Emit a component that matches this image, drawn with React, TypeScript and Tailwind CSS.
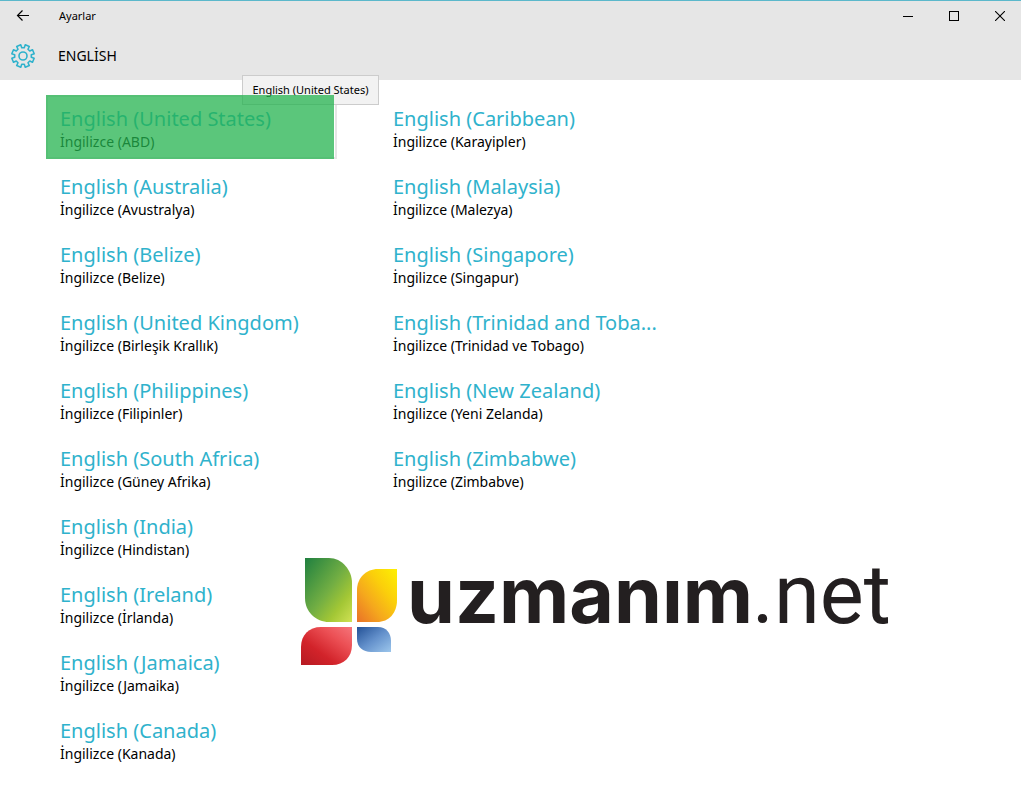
import clsx from "clsx";

type Language = { name: string; local: string };

const columns: Language[][] = [
  [
    { name: "English (United States)", local: "İngilizce (ABD)" },
    { name: "English (Australia)", local: "İngilizce (Avustralya)" },
    { name: "English (Belize)", local: "İngilizce (Belize)" },
    { name: "English (United Kingdom)", local: "İngilizce (Birleşik Krallık)" },
    { name: "English (Philippines)", local: "İngilizce (Filipinler)" },
    { name: "English (South Africa)", local: "İngilizce (Güney Afrika)" },
    { name: "English (India)", local: "İngilizce (Hindistan)" },
    { name: "English (Ireland)", local: "İngilizce (İrlanda)" },
    { name: "English (Jamaica)", local: "İngilizce (Jamaika)" },
    { name: "English (Canada)", local: "İngilizce (Kanada)" },
  ],
  [
    { name: "English (Caribbean)", local: "İngilizce (Karayipler)" },
    { name: "English (Malaysia)", local: "İngilizce (Malezya)" },
    { name: "English (Singapore)", local: "İngilizce (Singapur)" },
    { name: "English (Trinidad and Toba...", local: "İngilizce (Trinidad ve Tobago)" },
    { name: "English (New Zealand)", local: "İngilizce (Yeni Zelanda)" },
    { name: "English (Zimbabwe)", local: "İngilizce (Zimbabve)" },
  ],
];

// one closed outline with eight teeth, drawn around 0,0
function gearPath() {
  const points: string[] = [];
  for (let i = 0; i < 8; i++) {
    const steps = [
      [-14, 8.4],
      [-11, 11.4],
      [11, 11.4],
      [14, 8.4],
    ];
    for (const [offset, radius] of steps) {
      const angle = ((i * 45 + 22.5 + offset) * Math.PI) / 180;
      points.push(`${(radius * Math.cos(angle)).toFixed(2)} ${(radius * Math.sin(angle)).toFixed(2)}`);
    }
  }
  return `M${points.join("L")}Z`;
}

function Gear() {
  return (
    <svg viewBox="-13 -13 26 26" className="size-[26px]" fill="none" stroke="#2fb2cc" strokeWidth="1.6" strokeLinejoin="round" aria-hidden="true">
      <path d={gearPath()} />
      <circle r="4" />
    </svg>
  );
}

function TitleBar() {
  return (
    <div className="flex h-[30px] items-center">
      <button type="button" aria-label="Geri" className="flex h-full w-[46px] items-center justify-center">
        <svg viewBox="0 0 14 12" className="h-3 w-3.5" fill="none" stroke="black" strokeWidth="1.2" aria-hidden="true">
          <path d="M13 5.5H1.5M6.5 0.5L1.5 5.5L6.5 10.5" />
        </svg>
      </button>
      <span className="ml-[13px] text-[11px]">Ayarlar</span>
      <div className="ml-auto flex h-full">
        <button type="button" aria-label="Simge durumuna küçült" className="flex w-[46px] items-center justify-center">
          <svg viewBox="0 0 10 10" className="size-2.5" shapeRendering="crispEdges" aria-hidden="true">
            <path d="M0 5H10V6H0Z" />
          </svg>
        </button>
        <button type="button" aria-label="Ekranı kapla" className="flex w-[46px] items-center justify-center">
          <span className="size-2.5 border border-black" />
        </button>
        <button type="button" aria-label="Kapat" className="flex w-11 items-center justify-center pl-0.5">
          <svg viewBox="0 0 10 10" className="size-2.5" stroke="black" strokeWidth="1.1" aria-hidden="true">
            <path d="M0 0L10 10M10 0L0 10" />
          </svg>
        </button>
      </div>
    </div>
  );
}

function LanguageTile({ language, active }: { language: Language; active: boolean }) {
  return (
    <li className="relative">
      <button
        type="button"
        className={clsx(
          "flex h-16 w-full flex-col border-2 pt-[9px] pl-3 text-left whitespace-nowrap",
          active ? "border-[#e6e6e6]" : "border-transparent"
        )}
      >
        <span className="text-[20px] leading-[26px] text-[#2fb2cc]">{language.name}</span>
        <span className="text-[14px] leading-5">{language.local}</span>
      </button>
      {active && (
        <>
          <div
            role="tooltip"
            className="absolute -top-5 left-[196px] flex h-[30px] w-[137px] items-center justify-center border border-[#cccccc] bg-[#f2f2f2] text-[11px] whitespace-nowrap"
          >
            {language.name}
          </div>
          <div className="pointer-events-none absolute inset-y-0 left-0 right-[3px] bg-[#24b34f]/75" />
        </>
      )}
    </li>
  );
}

function Watermark() {
  return (
    <svg
      viewBox="0 -20 600 130"
      className="pointer-events-none absolute top-[537px] left-[300px] h-[130px] w-[600px]"
      role="img"
      aria-label="uzmanım.net"
    >
      <defs>
        <linearGradient id="green" x1="0" y1="0" x2="1" y2="1">
          <stop offset="0" stopColor="#1f8040" />
          <stop offset="0.5" stopColor="#72ae43" />
          <stop offset="0.75" stopColor="#a3c735" />
          <stop offset="1" stopColor="#d0e154" />
        </linearGradient>
        <linearGradient id="yellow" x1="0" y1="1" x2="1" y2="0">
          <stop offset="0" stopColor="#e97128" />
          <stop offset="0.35" stopColor="#f5a81d" />
          <stop offset="0.65" stopColor="#fbcf0b" />
          <stop offset="1" stopColor="#fdf003" />
        </linearGradient>
        <linearGradient id="red" x1="0" y1="1" x2="1" y2="0">
          <stop offset="0" stopColor="#b51a22" />
          <stop offset="0.35" stopColor="#d2232a" />
          <stop offset="0.7" stopColor="#ec5055" />
          <stop offset="1" stopColor="#f5757b" />
        </linearGradient>
        <linearGradient id="blue" x1="0" y1="0" x2="1" y2="1">
          <stop offset="0" stopColor="#235196" />
          <stop offset="0.5" stopColor="#6390cb" />
          <stop offset="1" stopColor="#9cc6ec" />
        </linearGradient>
      </defs>
      <path d="M5 1H29C42 1 52 13 52 26V65H29C16 65 5 55 5 41Z" fill="url(#green)" />
      <path d="M57 65V33C57 21 66 12 78 12H97V43C97 56 89 65 77 65Z" fill="url(#yellow)" />
      <path d="M1 108V90C1 78 9 70 21 70H52V88C52 100 44 108 32 108Z" fill="url(#red)" />
      <path d="M57 70H78C86 70 91 76 91 84V95H71C63 95 57 90 57 82Z" fill="url(#blue)" />
      <text x="107" y="66" fontSize="77" fontWeight="700" fontFamily="Inter, sans-serif" fill="#231f20">
        uzmanım
      </text>
      <text x="452" y="66" fontSize="83" fontFamily="Roboto, sans-serif" fill="#231f20">
        .net
      </text>
    </svg>
  );
}

export default function App() {
  return (
    <div className="relative min-h-screen overflow-hidden bg-white font-['Noto_Sans','Open_Sans',sans-serif] text-black">
      <header className="border-t border-[#5bb8cb] bg-[#e6e6e6]">
        <TitleBar />
        <div className="flex h-[49px] items-center gap-[22px] pl-2.5">
          <Gear />
          <h1 className="text-[14px]">ENGLİSH</h1>
        </div>
      </header>
      <main className="flex gap-[42px] pt-[15px] pl-[46px]">
        {columns.map((languages, column) => (
          <ul key={column} className="flex w-[291px] flex-col gap-1">
            {languages.map((language, row) => (
              <LanguageTile key={language.name} language={language} active={column === 0 && row === 0} />
            ))}
          </ul>
        ))}
      </main>
      <Watermark />
    </div>
  );
}
